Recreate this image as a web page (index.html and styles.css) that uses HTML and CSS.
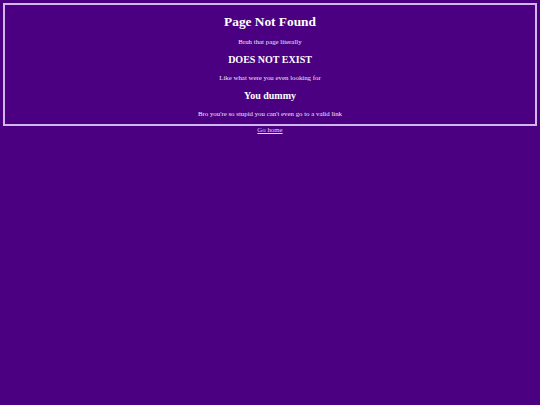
FILE: index.html
```html
<!DOCTYPE html>
<html>
<head>
<meta charset="utf-8">
<title>Page Not Found</title>
<link rel="stylesheet" href="styles.css">
</head>
<body class="page">
<div class="box">
<h1 class="title">Page Not Found</h1>
<p class="line">Bruh that page literally</p>
<h2 class="sub">DOES NOT EXIST</h2>
<p class="line">Like what were you even looking for</p>
<h2 class="sub">You dummy</h2>
<p class="line">Bro you're so stupid you can't even go to a valid link</p>
</div>
<div class="foot"><a class="home" href="#">Go home</a></div>
</body>
</html>
```
FILE: styles.css
```css
html, body {
  background: #4b0082;
}
.page {
  margin: 3.33px;
  font-family: "Liberation Serif", "DejaVu Serif", serif;
  font-size: 6.85px;
  line-height: 7.67px;
  color: #ffffff;
  text-align: center;
}
.box {
  border: 2px solid #d2b6ee;
}
.title {
  font-size: 13.33px;
  line-height: 15.3px;
  font-weight: bold;
  margin: 8.9px 0;
}
.sub {
  font-size: 10px;
  line-height: 11.5px;
  font-weight: bold;
  margin: 8.3px 0;
}
.line {
  margin: 6.67px 0;
  color: #eee2fc;
}
.foot {
  text-align: center;
}
.home {
  color: #e2d2fa;
  text-decoration: underline;
}
```
